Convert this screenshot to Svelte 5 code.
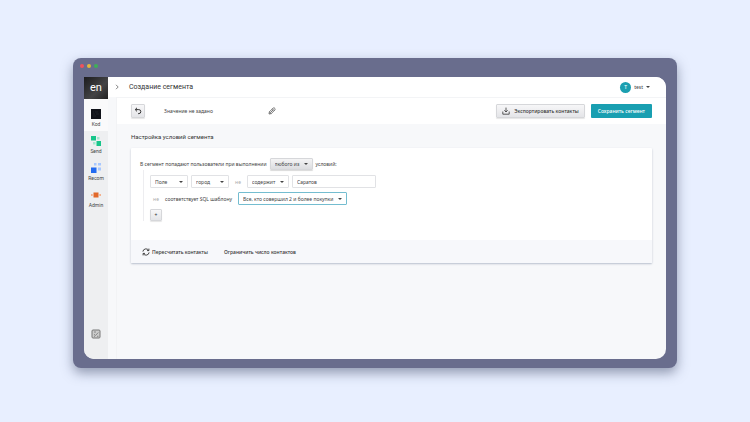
<script>
    let apps = [
        { id: "kod", label: "Kod" },
        { id: "send", label: "Send" },
        { id: "recom", label: "Recom" },
        { id: "admin", label: "Admin" },
    ];

    let current = $state("kod");
    let match = $state("любого из");
    let field = $state("Поле");
    let key = $state("город");
    let operator = $state("содержит");
    let city = $state("Саратов");
    let template = $state("Все, кто совершил 2 и более покупки");
</script>

<div class="page">
    <div class="window">
        <div class="lights">
            <span class="red"></span>
            <span class="yellow"></span>
            <span class="green"></span>
        </div>
        <div class="screen">
            <nav class="sidebar">
                <a class="logo" href="#home">en</a>
                {#each apps as app}
                    <a
                        class="app {current === app.id ? 'selected' : ''}"
                        href="#{app.id}"
                        onclick={() => (current = app.id)}
                    >
                        <svg viewBox="0 0 10 10">
                            {#if app.id === "kod"}
                                <rect width="10" height="10" fill="#11131a" />
                                <path d="M2 3h1M4 3h3M2 5h2M5 5h3M2 7h3" stroke="#2d303a" stroke-width=".5" />
                            {:else if app.id === "send"}
                                <rect width="5" height="4.5" fill="#17c58a" />
                                <rect x="6" y="1" width="2.5" height="2.5" fill="#a4e8cf" />
                                <rect x="5.5" y="5" width="4.5" height="5" fill="#17c58a" />
                                <rect x="2" y="6" width="2.5" height="2.5" fill="#a4e8cf" />
                            {:else if app.id === "recom"}
                                <rect y="4.5" width="5.5" height="5.5" fill="#236bf0" />
                                <rect x="3" y="0" width="2.5" height="2.5" fill="#a8c8ff" />
                                <rect x="7" y="0" width="3" height="2.5" fill="#a8c8ff" />
                                <rect x="7" y="4.5" width="3" height="3" fill="#a8c8ff" />
                            {:else}
                                <rect x="2.5" y="2.5" width="5" height="5" fill="#e2692b" />
                                <rect x="0" y="4" width="1.7" height="2" fill="#f3b18e" />
                                <rect x="8.3" y="4" width="1.7" height="2" fill="#f3b18e" />
                            {/if}
                        </svg>
                        <span>{app.label}</span>
                    </a>
                {/each}
                <button class="docs" aria-label="Журнал">
                    <svg viewBox="0 0 10 10" fill="none" stroke="#777" stroke-width="1">
                        <rect x="1" y="1" width="8" height="8" rx="1" fill="#ccc" />
                        <path d="M3 3h2M3 5.2l1.5 1.3L7.3 3.5M3 7.3h1M6 7.3h1.5" stroke-width=".8" />
                    </svg>
                </button>
            </nav>

            <div class="main">
                <header>
                    <button class="expand" aria-label="Развернуть меню">
                        <svg viewBox="0 0 6 6" fill="none" stroke="#666" stroke-width=".8">
                            <path d="M2 .8 4.2 3 2 5.2" />
                        </svg>
                    </button>
                    <h1>Создание сегмента</h1>
                    <button class="user">
                        <span class="avatar">T</span>
                        test
                        <i class="caret"></i>
                    </button>
                </header>

                <div class="body">
                    <div class="toolbar">
                        <button class="btn square" aria-label="Назад">
                            <svg viewBox="0 0 8 8" fill="none" stroke="#333" stroke-width="1">
                                <path d="M3 .8 1.2 2.6 3 4.4M1.4 2.6h3.4a1.9 1.9 0 0 1 0 4H4" />
                            </svg>
                        </button>
                        <span class="name">Значение не задано</span>
                        <button class="edit" aria-label="Изменить название">
                            <svg viewBox="0 0 8 8" fill="none" stroke="#555" stroke-width=".8">
                                <path d="M1 7l.4-2.2L5.2 1q.6-.5 1.2 0l.6.6q.5.6 0 1.2L3.2 6.6zM4.4 1.9l1.7 1.7M1.5 4.9l1.7 1.6M2.6 5.4l2.5-2.5" />
                            </svg>
                        </button>
                        <button class="btn export">
                            <svg viewBox="0 0 8 8" fill="none" stroke="#333" stroke-width=".8">
                                <path d="M4 .6V4.8M2.3 3.3 4 5l1.7-1.7M.8 4.5v2.7h6.4V4.5" />
                            </svg>
                            Экспортировать контакты
                        </button>
                        <button class="save">Сохранить сегмент</button>
                    </div>

                    <main>
                        <h2>Настройка условий сегмента</h2>
                        <section class="card">
                            <div class="conditions">
                                <div class="intro">
                                    <label for="match">В сегмент попадают пользователи при выполнении</label>
                                    <span class="select raised">
                                        <select id="match" bind:value={match}>
                                            <option>любого из</option>
                                            <option>всех</option>
                                        </select>
                                    </span>
                                    условий:
                                </div>
                                <div class="rules">
                                    <div class="rule">
                                        <span class="select short">
                                            <select aria-label="Источник" bind:value={field}>
                                                <option>Поле</option>
                                            </select>
                                        </span>
                                        <span class="select short">
                                            <select aria-label="Поле" bind:value={key}>
                                                <option>город</option>
                                            </select>
                                        </span>
                                        <button class="not">не</button>
                                        <span class="select operator">
                                            <select aria-label="Условие" bind:value={operator}>
                                                <option>содержит</option>
                                            </select>
                                        </span>
                                        <input aria-label="Значение" bind:value={city} />
                                    </div>
                                    <div class="rule">
                                        <button class="not">не</button>
                                        <label for="template">соответствует SQL шаблону</label>
                                        <span class="select focused">
                                            <select id="template" bind:value={template}>
                                                <option>Все, кто совершил 2 и более покупки</option>
                                            </select>
                                        </span>
                                    </div>
                                    <button class="btn add">+</button>
                                </div>
                            </div>
                            <footer>
                                <button>
                                    <svg viewBox="0 0 8 8" fill="none" stroke="#333" stroke-width=".9">
                                        <path d="M.9 3.6A3.1 3.1 0 0 1 6.6 2.3M7.1 4.4A3.1 3.1 0 0 1 1.4 5.7M6.9.6v2H5M1.1 7.4v-2H3" />
                                    </svg>
                                    Пересчитать контакты
                                </button>
                                <button>Ограничить число контактов</button>
                            </footer>
                        </section>
                    </main>
                </div>
            </div>
        </div>
    </div>
</div>

<style>
    :global(body) {
        background: #e8efff;
    }

    .page {
        box-sizing: border-box;
        min-height: 100vh;
        display: flex;
        padding: 58px 73px 54px;
        font: 5px/8px "Noto Sans", Roboto, sans-serif;
        color: #444;
    }

    .page *,
    .page *::after {
        box-sizing: border-box;
    }

    button,
    input,
    select {
        font: inherit;
        color: inherit;
        margin: 0;
        padding: 0;
        border: none;
        background: none;
    }

    button {
        display: flex;
        align-items: center;
        justify-content: center;
        cursor: pointer;
    }

    svg {
        display: block;
        flex: none;
        width: 8px;
        height: 8px;
    }

    a {
        color: inherit;
        text-decoration: none;
    }

    /* Window frame */
    .window {
        flex: 1;
        display: flex;
        flex-direction: column;
        padding: 0 11px 9px;
        border-radius: 8px;
        background: #696d8d;
        box-shadow: 0 5px 12px rgba(60, 70, 100, 0.5);
    }

    .lights {
        display: flex;
        gap: 3px;
        height: 19px;
        padding: 6px 0 0;
        margin-left: -4px;
    }

    .lights span {
        width: 4px;
        height: 4px;
        border-radius: 50%;
    }

    .red {
        background: #f0525c;
    }

    .yellow {
        background: #e3b93c;
    }

    .green {
        background: #3fae58;
    }

    .screen {
        flex: 1;
        display: flex;
        overflow: hidden;
        border-radius: 0 10px 10px 10px;
        background: #f7f8fa;
    }

    /* Sidebar */
    .sidebar {
        flex: none;
        width: 24px;
        display: flex;
        flex-direction: column;
        background: #eeeff1;
        font-family: Roboto, sans-serif;
    }

    .logo {
        height: 22px;
        margin-bottom: 5px;
        background: linear-gradient(135deg, #1c1c1e, #444446 60%, #222);
        color: #fff;
        font-size: 11px;
        line-height: 22px;
        text-align: center;
    }

    .app {
        height: 27px;
        padding-top: 5px;
        display: flex;
        flex-direction: column;
        align-items: center;
        gap: 1px;
    }

    .app svg,
    .docs svg {
        width: 10px;
        height: 10px;
    }

    .app.selected {
        margin-top: -5px;
        padding-top: 10px;
        height: 32px;
        background: #fafafb;
    }

    .docs {
        margin: auto auto 20px;
    }

    /* Header */
    .main {
        flex: 1;
        min-width: 0;
        display: flex;
        flex-direction: column;
    }

    header {
        height: 20px;
        display: flex;
        align-items: center;
        padding: 0 16px 0 6px;
        background: #fff;
    }

    .expand svg {
        width: 6px;
        height: 6px;
    }

    h1 {
        margin: 0 auto 0 9px;
        font: 400 7px/8px Roboto, sans-serif;
        color: #333;
    }

    .user {
        gap: 3px;
    }

    .avatar {
        width: 11px;
        height: 11px;
        border-radius: 50%;
        background: #1b9fb0;
        color: #fff;
        line-height: 11px;
        font-weight: 500;
    }

    .caret,
    .select::after {
        border: 2px solid transparent;
        border-top-color: #444;
        border-bottom: none;
    }

    .body {
        flex: 1;
        margin-left: 8px;
        border-left: 1px solid #f2f3f5;
    }

    .toolbar {
        height: 27px;
        display: flex;
        align-items: center;
        padding: 0 14px;
        border-top: 1px solid #f3f4f6;
        background: #fff;
    }

    .btn {
        height: 14px;
        border: 1px solid #d6d7da;
        border-radius: 1px;
        background: linear-gradient(#f7f7f8, #e4e5e8);
        box-shadow: 0 1px 1px rgba(0, 0, 0, 0.1);
        color: #333;
        font-weight: 500;
    }

    .square {
        width: 14px;
    }

    .name {
        width: 104px;
        margin-left: 19px;
    }

    .export {
        gap: 4px;
        padding: 0 5px;
        margin: 0 6px 0 auto;
    }

    .save {
        height: 14px;
        padding: 0 7px;
        border-radius: 1px;
        background: #199fb1;
        color: #fff;
        font-weight: 500;
    }

    /* Segment form */
    main {
        padding: 9px 14px;
    }

    h2 {
        margin: 0 0 7px;
        font: 400 6px/8px Roboto, sans-serif;
        color: #333;
    }

    .card {
        background: #fff;
        border-radius: 1px;
        box-shadow: 0 1px 2px rgba(40, 60, 100, 0.3);
    }

    .conditions {
        padding: 10px 9px 19px;
    }

    .intro {
        display: flex;
        align-items: center;
        gap: 3px;
        height: 12px;
    }

    .rules {
        display: flex;
        flex-direction: column;
        gap: 4px;
        margin-left: 3px;
        padding: 5px 0 0 6px;
        border-left: 1px solid #ededf0;
    }

    .rule {
        display: flex;
        align-items: center;
        gap: 3px;
    }

    .rule label {
        padding-right: 3px;
    }

    .select {
        display: inline-grid;
        grid-template-columns: 1fr;
        align-items: center;
    }

    .select select,
    .select::after {
        grid-area: 1 / 1;
    }

    .select::after {
        content: "";
        justify-self: end;
        margin-right: 5px;
        pointer-events: none;
    }

    select {
        appearance: none;
        height: 13px;
        padding: 0 12px 0 4px;
        border: 1px solid #e1e2e5;
        border-radius: 1px;
        background: #fff;
        cursor: pointer;
    }

    .raised select {
        height: 12px;
        border-color: #d6d7da;
        background: linear-gradient(#f4f4f5, #dcdde0);
        box-shadow: 0 1px 1px rgba(0, 0, 0, 0.15);
    }

    .focused select {
        border-color: #74bdd0;
    }

    .short {
        width: 38px;
    }

    .operator {
        width: 42px;
    }

    .not {
        width: 12px;
        color: #aaa;
    }

    input {
        width: 84px;
        height: 13px;
        padding: 0 4px;
        border: 1px solid #e1e2e5;
        border-radius: 1px;
        background: #fff;
    }

    .add {
        width: 12px;
        height: 12px;
    }

    footer {
        height: 23px;
        display: flex;
        align-items: center;
        gap: 16px;
        padding: 0 11px;
        background: #f7f8fb;
    }

    footer button {
        gap: 2px;
        color: #333;
        font-weight: 500;
    }
</style>
